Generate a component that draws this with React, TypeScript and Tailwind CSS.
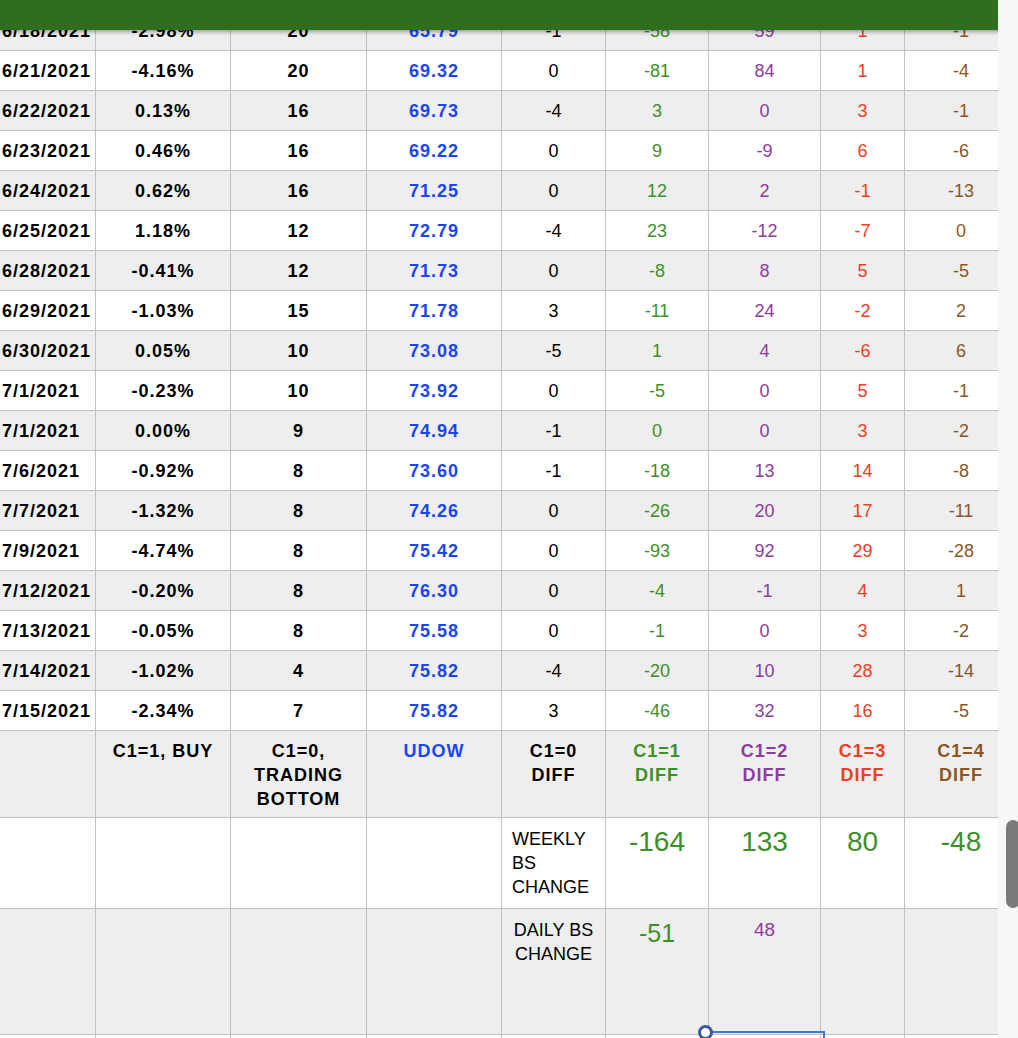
import React from "react";

type Row = [string, string, string, string, string, string, string, string, string];

const rows: Row[] = [
  ["6/18/2021", "-2.98%", "20", "65.79", "-1", "-58", "59", "1", "-1"],
  ["6/21/2021", "-4.16%", "20", "69.32", "0", "-81", "84", "1", "-4"],
  ["6/22/2021", "0.13%", "16", "69.73", "-4", "3", "0", "3", "-1"],
  ["6/23/2021", "0.46%", "16", "69.22", "0", "9", "-9", "6", "-6"],
  ["6/24/2021", "0.62%", "16", "71.25", "0", "12", "2", "-1", "-13"],
  ["6/25/2021", "1.18%", "12", "72.79", "-4", "23", "-12", "-7", "0"],
  ["6/28/2021", "-0.41%", "12", "71.73", "0", "-8", "8", "5", "-5"],
  ["6/29/2021", "-1.03%", "15", "71.78", "3", "-11", "24", "-2", "2"],
  ["6/30/2021", "0.05%", "10", "73.08", "-5", "1", "4", "-6", "6"],
  ["7/1/2021", "-0.23%", "10", "73.92", "0", "-5", "0", "5", "-1"],
  ["7/1/2021", "0.00%", "9", "74.94", "-1", "0", "0", "3", "-2"],
  ["7/6/2021", "-0.92%", "8", "73.60", "-1", "-18", "13", "14", "-8"],
  ["7/7/2021", "-1.32%", "8", "74.26", "0", "-26", "20", "17", "-11"],
  ["7/9/2021", "-4.74%", "8", "75.42", "0", "-93", "92", "29", "-28"],
  ["7/12/2021", "-0.20%", "8", "76.30", "0", "-4", "-1", "4", "1"],
  ["7/13/2021", "-0.05%", "8", "75.58", "0", "-1", "0", "3", "-2"],
  ["7/14/2021", "-1.02%", "4", "75.82", "-4", "-20", "10", "28", "-14"],
  ["7/15/2021", "-2.34%", "7", "75.82", "3", "-46", "32", "16", "-5"],
];

const GRID =
  "grid grid-cols-[96px_135px_136px_135px_104px_103px_112px_84px_113px] border-b border-[#c0c0c0]";
const CELL = "border-r border-[#c0c0c0] overflow-hidden";

const valueClass = [
  "pl-[2px] text-left font-bold tracking-[1px] text-black",
  "text-center font-bold tracking-[1px] text-black",
  "text-center font-bold tracking-[1px] text-black",
  "text-center font-bold tracking-[1px] text-[#1c45f2]",
  "text-center text-black",
  "text-center text-[#3d8f2a]",
  "text-center text-[#8e3b9e]",
  "text-center text-[#ec3e26]",
  "text-center text-[#8b5626]",
];

export default function App() {
  return (
    <div
      className="relative w-[1018px] h-[1038px] overflow-hidden bg-white text-[18px] leading-[24px]"
      style={{ fontFamily: '"Liberation Sans", Arial, Helvetica, sans-serif' }}
    >
      <div className="pt-[11px]">
        {rows.map((r, k) => (
          <div
            key={k}
            className={`${GRID} h-[40px] ${k % 2 === 0 ? "bg-[#eeeeee]" : "bg-white"}`}
          >
            {r.map((v, i) => (
              <div key={i} className={`${CELL} pt-[8px] whitespace-nowrap ${valueClass[i]}`}>
                {v}
              </div>
            ))}
          </div>
        ))}

        {/* column label row */}
        <div className={`${GRID} h-[87px] bg-[#eeeeee] font-bold tracking-[1px] text-center`}>
          <div className={CELL}></div>
          <div className={`${CELL} pt-[8px]`}>C1=1, BUY</div>
          <div className={`${CELL} pt-[8px]`}>
            C1=0,
            <br />
            TRADING
            <br />
            BOTTOM
          </div>
          <div className={`${CELL} pt-[8px] text-[#1c45f2]`}>UDOW</div>
          <div className={`${CELL} pt-[8px]`}>
            C1=0
            <br />
            DIFF
          </div>
          <div className={`${CELL} pt-[8px] text-[#3d8f2a]`}>
            C1=1
            <br />
            DIFF
          </div>
          <div className={`${CELL} pt-[8px] text-[#8e3b9e]`}>
            C1=2
            <br />
            DIFF
          </div>
          <div className={`${CELL} pt-[8px] text-[#ec3e26]`}>
            C1=3
            <br />
            DIFF
          </div>
          <div className={`${CELL} pt-[8px] text-[#8b5626]`}>
            C1=4
            <br />
            DIFF
          </div>
        </div>

        {/* weekly row */}
        <div className={`${GRID} h-[91px] bg-white`}>
          <div className={CELL}></div>
          <div className={CELL}></div>
          <div className={CELL}></div>
          <div className={CELL}></div>
          <div className={`${CELL} pt-[9px] pl-[10px] text-black`}>
            WEEKLY
            <br />
            BS
            <br />
            CHANGE
          </div>
          <div className={`${CELL} pt-[8px] text-center text-[28px] leading-[32px] text-[#3d8f2a]`}>-164</div>
          <div className={`${CELL} pt-[8px] text-center text-[28px] leading-[32px] text-[#3d8f2a]`}>133</div>
          <div className={`${CELL} pt-[8px] text-center text-[28px] leading-[32px] text-[#3d8f2a]`}>80</div>
          <div className={`${CELL} pt-[8px] text-center text-[28px] leading-[32px] text-[#3d8f2a]`}>-48</div>
        </div>

        {/* daily row */}
        <div className={`${GRID} h-[126px] bg-[#eeeeee]`}>
          <div className={CELL}></div>
          <div className={CELL}></div>
          <div className={CELL}></div>
          <div className={CELL}></div>
          <div className={`${CELL} pt-[9px] text-center text-black`}>
            DAILY BS
            <br />
            CHANGE
          </div>
          <div className={`${CELL} pt-[9px] text-center text-[25px] leading-[30px] text-[#3d8f2a]`}>-51</div>
          <div className={`${CELL} pt-[9px] text-center text-[19px] leading-[24px] text-[#8e3b9e]`}>48</div>
          <div className={CELL}></div>
          <div className={CELL}></div>
        </div>

        <div className={`${GRID} h-[40px] bg-white`}>
          {Array.from({ length: 9 }).map((_, i) => (
            <div key={i} className={CELL}></div>
          ))}
        </div>
      </div>

      {/* selection outline */}
      <div className="absolute left-[705px] top-[1031px] w-[120px] h-[20px] border-t-2 border-r-2 border-[#3b79d2]"></div>
      <div className="absolute left-[698px] top-[1025px] w-[15px] h-[15px] rounded-full bg-white border-[3px] border-[#3a5a9e]"></div>

      {/* green toolbar */}
      <div className="absolute left-0 top-0 w-full h-[30px] bg-[#2f6d1f] shadow-[0_2px_4px_rgba(0,0,0,0.35)]"></div>

      {/* scroll gutter */}
      <div className="absolute right-0 top-0 w-[20px] h-full bg-[#f7f7f7]">
        <div className="absolute left-[8px] top-[820px] w-[14px] h-[88px] rounded-[7px] bg-[#7a7a7a]"></div>
      </div>
    </div>
  );
}
